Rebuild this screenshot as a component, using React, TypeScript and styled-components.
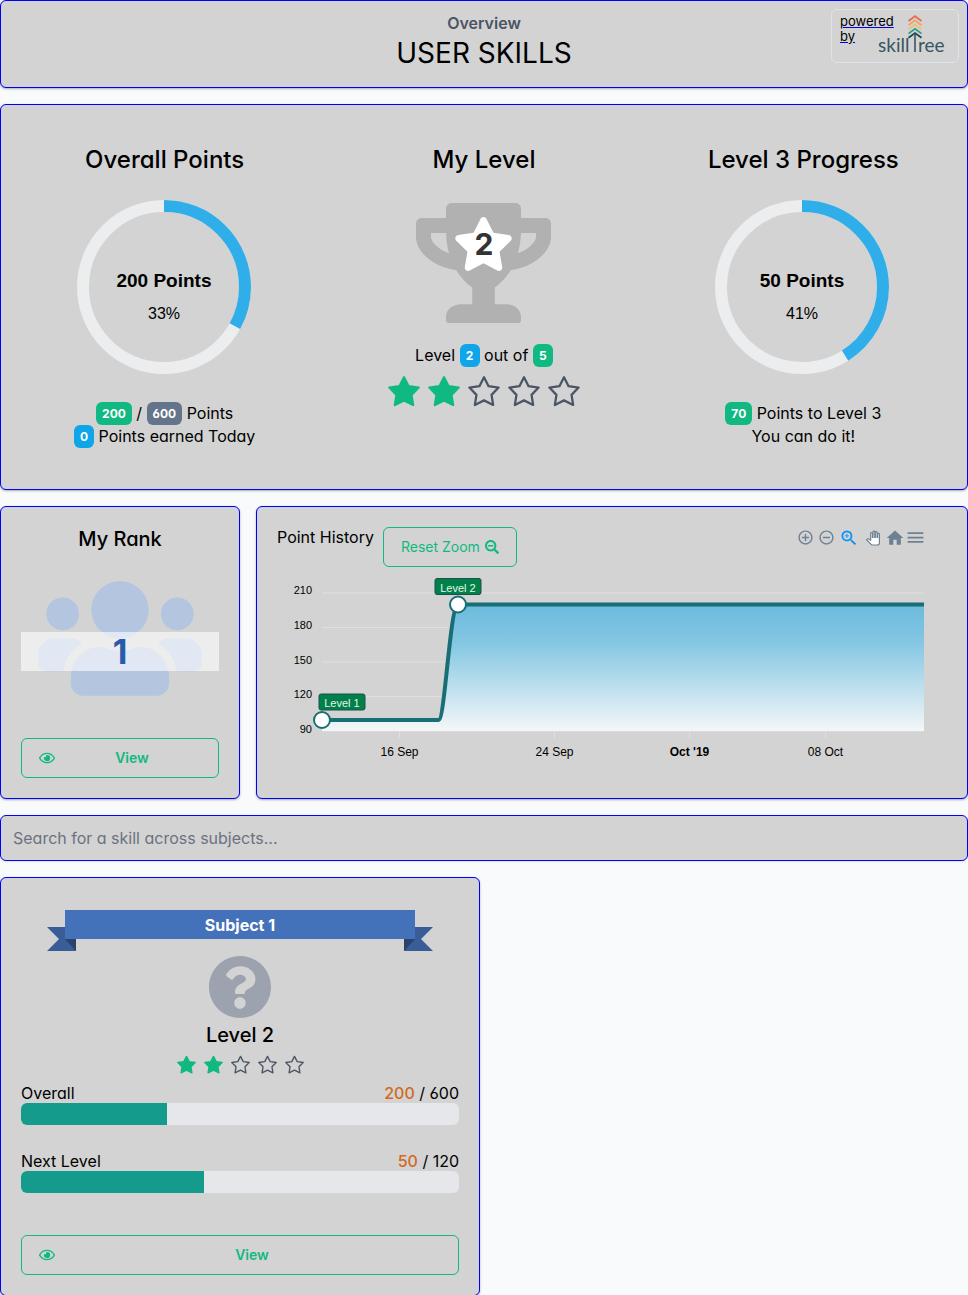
import React from 'react';
import styled, { createGlobalStyle } from 'styled-components';
import { FaTrophy, FaStar, FaUsers, FaRegEye, FaSearchMinus, FaQuestionCircle } from 'react-icons/fa';
import { MdAddCircleOutline, MdRemoveCircleOutline, MdZoomIn, MdPanTool, MdHome, MdMenu } from 'react-icons/md';

const GlobalStyle = createGlobalStyle`
  *, *::before, *::after { box-sizing: border-box; }
  body {
    margin: 0;
    background: #f8fafc;
    color: #000;
    font-family: Inter, "Liberation Sans", sans-serif;
    font-feature-settings: "cv02", "cv03", "cv04", "cv11";
    font-size: 16px;
    line-height: 20px;
  }
  h1, h2, h3, p { margin: 0; font-weight: 500; }
  button, input { font: inherit; font-feature-settings: inherit; }
  svg { display: block; flex: none; }
`;

const Page = styled.main`
  display: flex;
  flex-direction: column;
  gap: 16px;
`;

const Card = styled.section`
  background: #d3d3d3;
  border: 1px solid #0000ff;
  border-radius: 6px;
  box-shadow: 0 1px 3px rgba(0, 0, 0, 0.12), 0 1px 2px rgba(0, 0, 0, 0.2);
`;

const Header = styled(Card)`
  display: grid;
  grid-template-columns: 1fr auto 1fr;
  padding: 8px 8px 14px;
`;

const HeaderTitles = styled.div`
  grid-column: 2;
  padding-top: 4px;
  text-align: center;
`;

const Crumb = styled.div`
  font-weight: 600;
  color: #4b5563;
`;

const PageTitle = styled.h1`
  font-size: 28px;
  font-weight: 400;
  line-height: 40px;
`;

const PoweredBy = styled.a`
  justify-self: end;
  display: flex;
  width: 128px;
  height: 54px;
  padding: 4px 8px;
  border: 1px solid #dce5ee;
  border-radius: 6px;
  color: #0000ee;
  font-size: 13px;
  line-height: 15px;
  span { color: #000; }
`;

const PoweredText = styled.div`
  width: 38px;
`;

const Overview = styled(Card)`
  display: grid;
  grid-template-columns: repeat(3, 1fr);
  padding: 39px 4px 41px;
`;

const Stat = styled.div`
  display: flex;
  flex-direction: column;
  align-items: center;
  text-align: center;
`;

const StatTitle = styled.h2`
  font-size: 24px;
  line-height: 32px;
`;

const RingSvg = styled.svg`
  margin: 23px 0 27px;
`;

const Line = styled.p`
  font-weight: 400;
  line-height: 23px;
`;

const Badge = styled.span<{ $color: string }>`
  display: inline-block;
  height: 23px;
  padding: 0 6px;
  border-radius: 6px;
  background: ${(p) => p.$color};
  color: #fff;
  font-size: 12px;
  font-weight: 700;
  line-height: 23px;
  min-width: 20px;
  vertical-align: top;
`;

const TrophyBox = styled.div`
  position: relative;
  margin: 27px 0 21px;
  color: #b1b1b1;
`;

const TrophyIcon = styled(FaTrophy)`
  width: 135px;
  height: 120px;
`;

const TrophyStar = styled.div`
  position: absolute;
  top: 14px;
  left: 0;
  right: 0;
  display: grid;
  place-items: center;
  color: #fff;
  > * { grid-area: 1 / 1; }
`;

const WhiteStar = styled(FaStar)`
  width: 61px;
  height: 54px;
`;

const TrophyLevel = styled.span`
  color: #333;
  font-size: 30px;
  font-weight: 700;
`;

const StarRow = styled.div<{ $top: number }>`
  display: flex;
  justify-content: center;
  gap: 8px;
  margin-top: ${(p) => p.$top}px;
`;

const MiddleRow = styled.div`
  display: flex;
  gap: 16px;
`;

const RankCard = styled(Card)`
  flex: 0 0 240px;
  display: flex;
  flex-direction: column;
  padding: 20px;
`;

const SmallTitle = styled.h3`
  font-size: 20px;
  line-height: 24px;
  text-align: center;
`;

const RankFigure = styled.div`
  position: relative;
  display: flex;
  justify-content: center;
  margin: 22px 0 34px;
  color: #b4c5e0;
`;

const UsersIcon = styled(FaUsers)`
  width: 164px;
  height: 131px;
`;

const RankBand = styled.div`
  position: absolute;
  top: 59px;
  left: 0;
  right: 0;
  height: 39px;
  background: rgba(255, 255, 255, 0.6);
  color: #295bac;
  font-size: 34px;
  font-weight: 700;
  line-height: 39px;
  text-align: center;
`;

const OutlineButton = styled.button<{ $bold?: boolean }>`
  display: flex;
  align-items: center;
  gap: ${(p) => (p.$bold ? 8 : 5)}px;
  height: 40px;
  padding: 0 17px;
  border: 1px solid #10b981;
  border-radius: 6px;
  background: transparent;
  color: #10b981;
  font-size: 14px;
  font-weight: ${(p) => (p.$bold ? 600 : 400)};
`;

const ButtonLabel = styled.span`
  flex: 1;
  text-align: center;
`;

const HistoryCard = styled(Card)`
  flex: 1;
  min-width: 0;
  padding: 20px;
`;

const HistoryHead = styled.div`
  display: flex;
  align-items: flex-start;
  gap: 9px;
`;

const Toolbar = styled.div`
  display: flex;
  align-items: center;
  gap: 2px;
  height: 21px;
  margin-left: auto;
  margin-right: 22px;
`;

const ToolButton = styled.button<{ $active?: boolean }>`
  display: flex;
  justify-content: center;
  width: ${(p) => (p.$active ? 22 : 19)}px;
  padding: 0;
  border: 0;
  background: transparent;
  color: ${(p) => (p.$active ? '#008ffb' : '#6e8192')};
`;

const PanButton = styled(ToolButton)`
  width: 21px;
  color: #fff;
  svg { overflow: visible; }
  path:last-of-type { stroke: #6e8192; stroke-width: 2px; }
`;

const Chart = styled.svg`
  width: 100%;
  height: auto;
  font-family: "Liberation Sans", Arial, sans-serif;
`;

const Search = styled.input`
  width: 100%;
  height: 46px;
  padding: 0 12px;
  border: 1px solid #0000ff;
  border-radius: 6px;
  background: #d3d3d3;
  color: #000;
  box-shadow: 0 1px 2px rgba(0, 0, 0, 0.1);
  &::placeholder { color: #6b7280; opacity: 1; }
`;

const Subjects = styled.div`
  display: grid;
  grid-template-columns: 1fr 1fr;
  gap: 8px;
`;

const SubjectCard = styled(Card)`
  display: flex;
  flex-direction: column;
  padding: 32px 20px 20px;
`;

const Ribbon = styled.div`
  position: relative;
  align-self: center;
  width: 80%;
  height: 29px;
  color: #fff;
  text-align: center;
`;

const Tail = styled.svg<{ $right?: boolean }>`
  position: absolute;
  top: 17px;
  ${(p) => (p.$right ? 'right: -18px; transform: scaleX(-1);' : 'left: -18px;')}
`;

const RibbonLabel = styled.h3`
  position: relative;
  height: 29px;
  background: #4472ba;
  font-size: 16px;
  font-weight: 700;
  line-height: 30px;
`;

const SubjectIcon = styled.div`
  display: flex;
  justify-content: center;
  margin: 16px 0 4px;
  color: #9ca2ae;
`;

const Meter = styled.div<{ $top: number }>`
  margin-top: ${(p) => p.$top}px;
`;

const MeterHead = styled.div`
  display: flex;
  justify-content: space-between;
`;

const Earned = styled.span`
  color: #d2691e;
  font-weight: 500;
`;

const Track = styled.div`
  height: 22px;
  border-radius: 6px;
  background: #e5e7eb;
  overflow: hidden;
`;

const Fill = styled.div`
  height: 100%;
  background: #149b8c;
`;

const SubjectView = styled(OutlineButton)`
  margin-top: 42px;
`;

const STAR = '7,1 9,4.9 13.4,5.5 10.3,8.7 11,13.1 7,11.1 3,13.1 3.7,8.7 0.6,5.5 5,4.9';

function Stars({ size, top, label }: { size: number; top: number; label: string }) {
  return (
    <StarRow $top={top} role="img" aria-label={label}>
      {[1, 2, 3, 4, 5].map((n) => (
        <svg key={n} width={size} height={size} viewBox="0 0 14 14">
          <polygon
            points={STAR}
            fill={n <= 2 ? '#10b981' : 'none'}
            stroke={n <= 2 ? '#10b981' : '#4b5563'}
            strokeWidth="1"
            strokeLinejoin="round"
          />
        </svg>
      ))}
    </StarRow>
  );
}

function Ring({ percent, label }: { percent: number; label: string }) {
  const length = 2 * Math.PI * 81;
  return (
    <RingSvg width="176" height="176" viewBox="1 0 176 176" fontFamily="Liberation Sans, Arial, sans-serif" textAnchor="middle">
      <circle cx="88" cy="88" r="81" fill="none" stroke="#ecedef" strokeWidth="12" />
      <circle
        cx="88"
        cy="88"
        r="81"
        fill="none"
        stroke="#2faeea"
        strokeWidth="12"
        strokeDasharray={`${(length * percent) / 100} ${length}`}
        transform="rotate(-90 88 88)"
      />
      <text x="88" y="88" fontSize="19" fontWeight="700">{label}</text>
      <text x="88" y="120" fontSize="16">{percent}%</text>
    </RingSvg>
  );
}

function Logo() {
  const colors = ['#e76f51', '#f4a261', '#e9c46a', '#2a9d8f', '#264653'];
  return (
    <svg width="70" height="44" viewBox="0 0 70 44" fill="none">
      {colors.map((c, i) => (
        <path key={c} d={`M30.5 ${7 + i * 4.2} L37 ${2.2 + i * 4.2} L43.5 ${7 + i * 4.2}`} stroke={c} strokeWidth="1.8" />
      ))}
      <path d="M37 19.5 V38" stroke="#38575f" strokeWidth="1.6" />
      <g fill="#38575f" fontFamily="Lato, sans-serif" fontSize="19">
        <text x="0" y="38">skill</text>
        <text x="40" y="38">ree</text>
      </g>
    </svg>
  );
}

const yTicks = [210, 180, 150, 120, 90];
const xTicks = [
  { x: 122, label: '16 Sep' },
  { x: 277, label: '24 Sep' },
  { x: 412, label: "Oct '19", bold: true },
  { x: 548, label: '08 Oct' },
];
const levels = [
  { x: 45, y: 153, boxX: 42, label: 'Level 1' },
  { x: 181, y: 37.5, boxX: 158, label: 'Level 2' },
];
const LINE = 'M45 153 H161.5 C168 153 173 37.5 181 37.5 H647';

function HistoryChart() {
  return (
    <Chart viewBox="0 0 670 211" role="img" aria-label="Point history">
      <defs>
        <linearGradient id="area" gradientUnits="userSpaceOnUse" x1="0" y1="37" x2="0" y2="164">
          <stop offset="0" stopColor="#67b9dd" />
          <stop offset="0.3" stopColor="#80c6e3" />
          <stop offset="1" stopColor="#f6f8fa" />
        </linearGradient>
      </defs>
      {yTicks.map((t, i) => (
        <g key={t}>
          <path d={`M45 ${26 + i * 34.5} H646`} stroke="#e0e0e0" />
          <text x="35" y={27 + i * 34.75} fontSize="11" textAnchor="end">{t}</text>
        </g>
      ))}
      {xTicks.map((t) => (
        <g key={t.label}>
          <path d={`M${t.x + 0.5} 165 V171`} stroke="#e0e0e0" />
          <text x={t.x + 0.5} y="189" fontSize="12" fontWeight={t.bold ? 700 : 400} textAnchor="middle">{t.label}</text>
        </g>
      ))}
      <path d={`${LINE} V164 H45 Z`} fill="url(#area)" fillOpacity="0.96" />
      <path d={LINE} fill="none" stroke="#176f75" strokeWidth="4" />
      {levels.map((l) => (
        <g key={l.label}>
          <rect x={l.boxX} y={l.y - 26} width="46" height="16" rx="2" fill="#008149" stroke="#1c4f50" />
          <text x={l.boxX + 23} y={l.y - 13} fontSize="11" fill="#e8f5ee" textAnchor="middle">{l.label}</text>
          <circle cx={l.x} cy={l.y} r="8" fill="#fff" stroke="#176f75" strokeWidth="2" />
        </g>
      ))}
    </Chart>
  );
}

function RibbonTail({ right }: { right?: boolean }) {
  return (
    <Tail $right={right} width="29" height="24" viewBox="0 0 29 24">
      <path d="M0 0 H29 V24 H0 L12 12 Z" fill="#385d97" />
      <path d="M18 12 H29 V24 Z" fill="#29436d" />
    </Tail>
  );
}

function Progress({ label, earned, total, top }: { label: string; earned: number; total: number; top: number }) {
  return (
    <Meter $top={top}>
      <MeterHead>
        <span>{label}</span>
        <span><Earned>{earned}</Earned> / {total}</span>
      </MeterHead>
      <Track role="progressbar" aria-label={label} aria-valuenow={earned} aria-valuemax={total}>
        <Fill style={{ width: `${(earned / total) * 100}%` }} />
      </Track>
    </Meter>
  );
}

export default function App() {
  return (
    <>
      <GlobalStyle />
      <Page>
        <Header as="header">
          <HeaderTitles>
            <Crumb>Overview</Crumb>
            <PageTitle>USER SKILLS</PageTitle>
          </HeaderTitles>
          <PoweredBy href="#skilltree">
            <PoweredText><span>powered</span> <span>by</span></PoweredText>
            <Logo />
          </PoweredBy>
        </Header>

        <Overview>
          <Stat>
            <StatTitle>Overall Points</StatTitle>
            <Ring percent={33} label="200 Points" />
            <Line><Badge $color="#10b981">200</Badge> / <Badge $color="#64748b">600</Badge> Points</Line>
            <Line><Badge $color="#0ea5e9">0</Badge> Points earned Today</Line>
          </Stat>
          <Stat>
            <StatTitle>My Level</StatTitle>
            <TrophyBox>
              <TrophyIcon />
              <TrophyStar>
                <WhiteStar />
                <TrophyLevel>2</TrophyLevel>
              </TrophyStar>
            </TrophyBox>
            <Line>Level <Badge $color="#0ea5e9">2</Badge> out of <Badge $color="#10b981">5</Badge></Line>
            <Stars size={32} top={8} label="Level 2 of 5" />
          </Stat>
          <Stat>
            <StatTitle>Level 3 Progress</StatTitle>
            <Ring percent={41} label="50 Points" />
            <Line><Badge $color="#10b981">70</Badge> Points to Level 3</Line>
            <Line>You can do it!</Line>
          </Stat>
        </Overview>

        <MiddleRow>
          <RankCard>
            <SmallTitle>My Rank</SmallTitle>
            <RankFigure>
              <UsersIcon />
              <RankBand>1</RankBand>
            </RankFigure>
            <OutlineButton type="button" $bold>
              <FaRegEye size={16} />
              <ButtonLabel>View</ButtonLabel>
            </OutlineButton>
          </RankCard>
          <HistoryCard>
            <HistoryHead>
              <span>Point History</span>
              <OutlineButton type="button">
                Reset Zoom <FaSearchMinus size={14} />
              </OutlineButton>
              <Toolbar>
                <ToolButton type="button" aria-label="Zoom in"><MdAddCircleOutline size={17} /></ToolButton>
                <ToolButton type="button" aria-label="Zoom out"><MdRemoveCircleOutline size={17} /></ToolButton>
                <ToolButton type="button" aria-label="Selection zoom" $active><MdZoomIn size={20} /></ToolButton>
                <PanButton type="button" aria-label="Pan"><MdPanTool size={14} /></PanButton>
                <ToolButton type="button" aria-label="Reset"><MdHome size={20} /></ToolButton>
                <ToolButton type="button" aria-label="Menu"><MdMenu size={21} /></ToolButton>
              </Toolbar>
            </HistoryHead>
            <HistoryChart />
          </HistoryCard>
        </MiddleRow>

        <Search type="search" aria-label="Search for a skill" placeholder="Search for a skill across subjects..." />

        <Subjects>
          <SubjectCard>
            <Ribbon>
              <RibbonTail />
              <RibbonTail right />
              <RibbonLabel>Subject 1</RibbonLabel>
            </Ribbon>
            <SubjectIcon><FaQuestionCircle size={64} /></SubjectIcon>
            <SmallTitle>Level 2</SmallTitle>
            <Stars size={19} top={8} label="Subject level 2 of 5" />
            <Progress label="Overall" earned={200} total={600} top={9} />
            <Progress label="Next Level" earned={50} total={120} top={26} />
            <SubjectView type="button" $bold>
              <FaRegEye size={16} />
              <ButtonLabel>View</ButtonLabel>
            </SubjectView>
          </SubjectCard>
        </Subjects>
      </Page>
    </>
  );
}
